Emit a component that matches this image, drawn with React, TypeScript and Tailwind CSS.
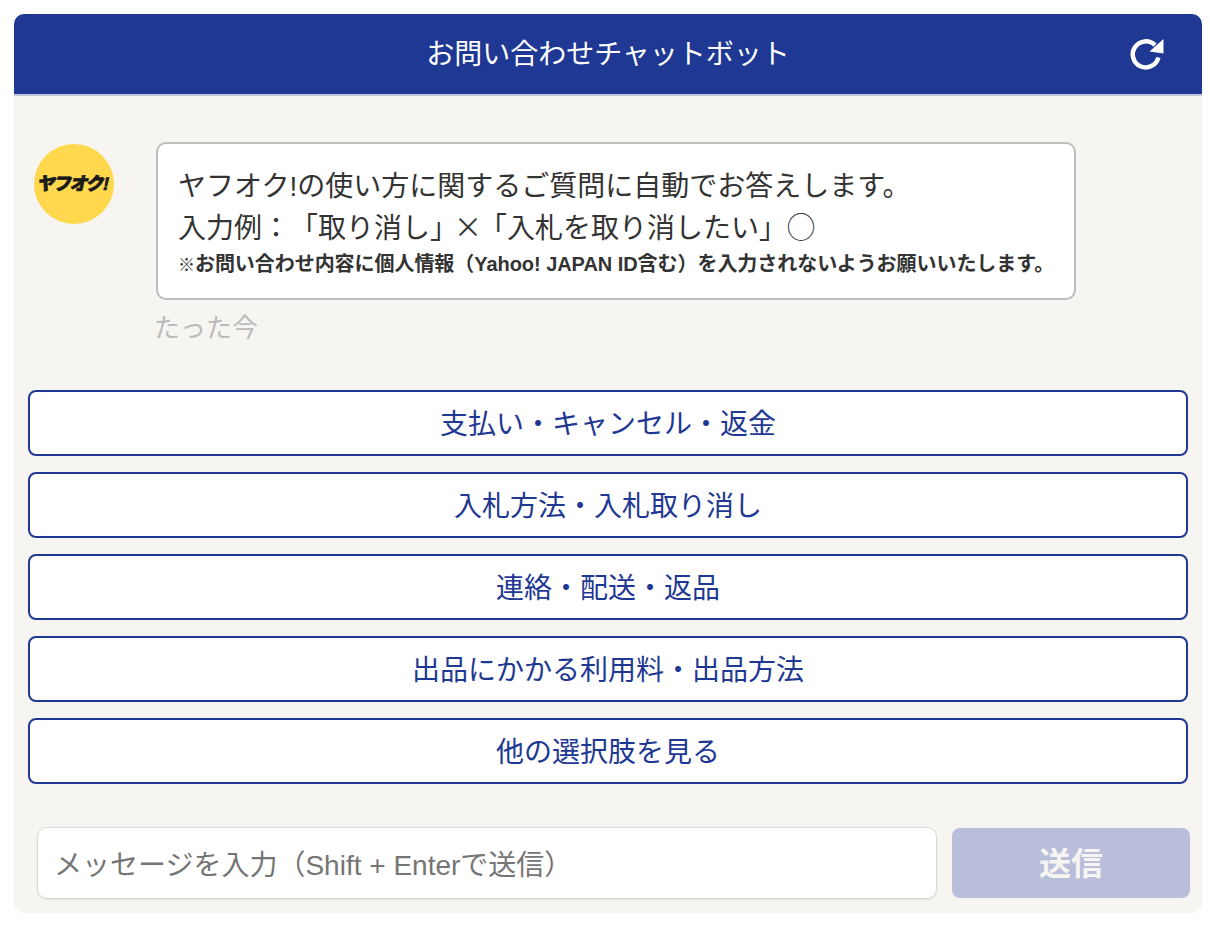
const CHOICES = [
  "支払い・キャンセル・返金",
  "入札方法・入札取り消し",
  "連絡・配送・返品",
  "出品にかかる利用料・出品方法",
  "他の選択肢を見る",
];

const FONT = "font-['Liberation_Sans','Noto_Sans_CJK_JP',sans-serif]";

function App() {
  return (
    <div className={`min-h-[940px] bg-white p-[14px] pr-2 ${FONT} [text-spacing-trim:space-all]`}>
      <div className="flex h-[899px] w-[1188px] flex-col rounded-[10px] bg-[#f6f5f2]">
        <header className="relative flex h-[82px] shrink-0 items-center justify-center rounded-t-[10px] border-b-2 border-[#c3c8d8] bg-[#1e3893] pt-[2px]">
          <h1 className="text-[28px] leading-none text-white">お問い合わせチャットボット</h1>
          <button type="button" aria-label="更新" className="absolute right-[34px] top-[17px]">
            <svg viewBox="0 0 44 44" className="h-11 w-11" fill="none">
              <path d="M31 14.2A13 13 0 1 0 34.4 26.5" stroke="#fff" strokeWidth="4.5" />
              <path d="M39.5 8V22.5L25.5 20.5Z" fill="#fff" />
            </svg>
          </button>
        </header>

        <section className="flex items-start pl-5 pt-[46px]">
          <div className="mt-[2px] flex h-20 w-20 shrink-0 items-center justify-center rounded-full bg-[#ffd84d] pr-[2px]">
            <span className="-skew-x-12 text-[18px] font-black leading-none tracking-[-1.6px] text-[#1a1a1a] [-webkit-text-stroke:0.7px_#1a1a1a]">ヤフオク!</span>
          </div>
          <div className="ml-[42px]">
            <div className="h-[158px] w-[920px] rounded-[10px] border-2 border-[#bdbdbd] bg-white pl-[20px] pt-[22px] text-[#333]">
              <p className="text-[28px] leading-[42px]">ヤフオク!の使い方に関するご質問に自動でお答えします。</p>
              <p className="text-[28px] leading-[42px]">
                入力例：「取り消し<span className="tracking-[-4px]">」</span>
                <span className="font-['Noto_Sans_CJK_JP',sans-serif] leading-none tracking-[-3px] [font-feature-settings:'fwid']">×</span>
                「入札を取り消したい」◯
              </p>
              <p className="text-[20px] font-bold leading-[28px] tracking-[-0.05px]">
                <span className="text-[17px]">※</span>お問い合わせ内容に個人情報（Yahoo! JAPAN ID含む）を入力されないようお願いいたします。
              </p>
            </div>
            <div className="-ml-[2px] mt-[10px] text-[26px] leading-9 text-[#bbb]">たった今</div>
          </div>
        </section>

        <div className="mt-[44px] flex flex-col gap-4 px-[14px]">
          {CHOICES.map((label) => (
            <button
              key={label}
              type="button"
              className="h-[66px] rounded-[8px] border-2 border-[#1e3893] bg-white pt-[4px] text-[28px] leading-none text-[#1e3893]"
            >
              {label}
            </button>
          ))}
        </div>

        <div className="mt-[43px] flex items-center pl-[23px]">
          <div className="flex h-[72px] w-[900px] items-center rounded-[10px] border border-[#d9d9d6] bg-white pl-4 pt-[6px] text-[28px] text-[#757575] shadow-[0_1px_2px_rgba(0,0,0,0.08)]">
            メッセージを入力（Shift + Enterで送信）
          </div>
          <button
            type="button"
            className="ml-[15px] h-[70px] w-[238px] rounded-[8px] bg-[#b9bfdb] pt-[2px] text-[32px] font-bold leading-none text-[#f6f5f2]"
          >
            送信
          </button>
        </div>
      </div>
    </div>
  );
}

export default App;
